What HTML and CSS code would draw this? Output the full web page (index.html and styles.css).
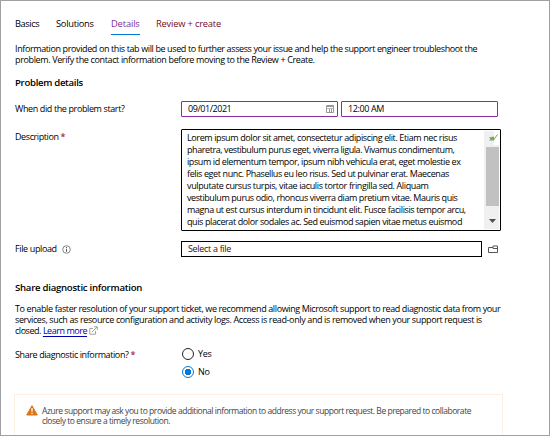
FILE: index.html
```html
<!DOCTYPE html>
<html lang="en">
<head>
<meta charset="utf-8">
<title>New support request</title>
<link rel="stylesheet" href="styles.css">
</head>
<body>
<main class="page">
  <nav class="tabs">
    <a class="tab basics">Basics</a><a class="tab solutions">Solutions</a><a class="tab details">Details</a><a class="tab review">Review + create</a>
  </nav>
  <p class="para intro"><span class="i1">Information provided on this tab will be used to further assess your issue and help the support engineer troubleshoot the</span><br><span class="i2">problem. Verify the contact information before moving to the Review + Create.</span></p>
  <h2 class="problem-title">Problem details</h2>
  <div class="row when">
    <label class="label l-when">When did the problem start?</label>
    <div class="input date"><span class="v-date">09/01/2021</span>
      <svg width="8" height="8" viewBox="0 0 8 8" fill="none" stroke="#989898"><path d="M.5 .5h7v7h-7z"/><path d="M0 1.500h8M3.500 3.500v4M5.500 3.500v4" /><path d="M1 3.500h6" stroke="#bbb"/></svg>
    </div>
    <div class="input time"><span class="v-time">12:00 AM</span></div>
  </div>
  <div class="row description">
    <label class="label"><span class="l-desc">Description</span><b class="req">*</b></label>
    <div class="textarea">
      <div class="lorem"><span class="t1">Lorem ipsum dolor sit amet, consectetur adipiscing elit. Etiam nec risus</span><br><span class="t2">pharetra, vestibulum purus eget, viverra ligula. Vivamus condimentum,</span><br><span class="t3">ipsum id elementum tempor, ipsum nibh vehicula erat, eget molestie ex</span><br><span class="t4">felis eget nunc. Phasellus eu leo risus. Sed ut pulvinar erat. Maecenas</span><br><span class="t5">vulputate cursus turpis, vitae iaculis tortor fringilla sed. Aliquam</span><br><span class="t6">vestibulum purus odio, rhoncus viverra diam pretium vitae. Mauris quis</span><br><span class="t7">magna ut est cursus interdum in tincidunt elit. Fusce facilisis tempor arcu,</span><br><span class="t8">quis placerat dolor sodales ac. Sed euismod sapien vitae metus euismod</span></div>
      <div class="scrollbar">
        <svg class="valid" width="15" height="16" viewBox="0 0 15 16"><path fill="#fff" d="M10 0h5v14h-5z"/><path fill="#8f9a86" d="M5 6.500L10 5.500v4H5l1.500-1.500z"/><path d="M7.500 7l2 2L13.500 3.500" fill="none" stroke="#67b23a"/></svg>
        <div class="thumb"></div>
        <svg class="down" width="15" height="21" viewBox="0 0 15 21"><path fill="#505050" d="M5 13h7L8.500 17z"/></svg>
      </div>
    </div>
  </div>
  <div class="row file">
    <label class="label"><span class="l-file">File upload</span>
      <svg class="info" width="9" height="9" viewBox="0 0 9 9"><circle cx="4.500" cy="4.500" r="3.800" fill="none" stroke="#666" stroke-width=".8"/><path d="M4.500 2v1M4.500 3.800v3" stroke="#555"/></svg>
    </label>
    <div class="input upload"><span class="v-file">Select a file</span></div>
    <svg class="folder" width="11" height="9" viewBox="0 0 11 9" fill="none" stroke="#555"><path d="M.5 2.500h4.500v-1.500h4.500v6.500h-9zM5 2.500v1h4.500"/></svg>
  </div>
  <h2 class="share-title">Share diagnostic information</h2>
  <p class="para consent"><span class="c1">To enable faster resolution of your support ticket, we recommend allowing Microsoft support to read diagnostic data from your</span><br><span class="c2">services, such as resource configuration and activity logs. Access is read-only and is removed when your support request is</span><br><span class="c3">closed. <a class="learn">Learn more</a></span><svg class="ext" width="9" height="9" viewBox="0 0 9 9" fill="none" stroke="#999" stroke-width=".9"><path d="M4 2.500H.8v5.700h5.700V5M3 6l5-5M5 .8h3.300V4"/></svg></p>
  <div class="row share">
    <label class="label share-label"><span class="l-share">Share diagnostic information?</span><b class="req">*</b></label>
    <div class="radios">
      <div class="radio"><i class="dot"></i><span>Yes</span></div>
      <div class="radio"><i class="dot on"></i><span>No</span></div>
    </div>
  </div>
  <aside class="notice">
    <svg width="12" height="11" viewBox="0 0 12 11"><path d="M6 .7L11.300 10H.7z" fill="#d9761c" stroke="#d9761c" stroke-linejoin="round"/><path d="M6 3v3.800M6 7.800v1.200" stroke="#fff" stroke-width="1.200"/></svg>
    <p><span class="n1">Azure support may ask you to provide additional information to address your support request. Be prepared to collaborate</span><br><span class="n2">closely to ensure a timely resolution.</span></p>
  </aside>
</main>
</body>
</html>
```
FILE: styles.css
```css
* { box-sizing: border-box; }
body { margin: 0; background: #fff; }
.page {
  width: 550px; height: 436px; overflow: hidden;
  border: 1px solid #a0a0a0; padding: 14px 0 0 14px;
  font: 9px/11px "Open Sans", "Noto Sans", sans-serif;
  letter-spacing: -.36px; color: #000; white-space: nowrap;
}
p, h2 { margin: 0; }
svg { display: block; flex: none; }
.tabs { display: flex; height: 20px; font-size: 9.3px; }
.tab { height: 20px; line-height: 18px; }
.basics { width: 41px; letter-spacing: -.45px; }
.solutions { width: 55px; letter-spacing: -.27px; }
.details { width: 29px; margin-right: 16px; color: #7b2c98; border-bottom: 1px solid #0078d4; letter-spacing: -.13px; }
.review { color: #750b1c; letter-spacing: -.18px; }
.para { height: 22px; }
.intro { margin-top: 8px; }
h2 { font-size: 9.6px; line-height: 12px; font-weight: 600; }
.problem-title { margin-top: 12px; letter-spacing: -.31px; }
.row { display: flex; }
.label { width: 166px; display: flex; flex: none; }
.when { margin-top: 12px; height: 16px; line-height: 15px; }
.input { height: 16px; border: 1px solid #000; display: flex; align-items: center; padding: 0 4px 0 6px; justify-content: space-between; line-height: 14px; }
.date { width: 157px; border-color: #8a2da5; border-radius: 1px; margin-right: 3px; padding-right: 3px; }
.time { width: 157px; border-color: #8a2da5; border-radius: 1px; }
.description { margin-top: 12px; height: 102px; line-height: 15px; }
.req { color: #a4262c; margin-left: 2px; font-weight: 600; }
.textarea { width: 320px; height: 102px; border: 1px solid #000; border-radius: 1px; display: flex; justify-content: space-between; }
.lorem { padding: 2px 0 0 5px; line-height: 12px; }
.scrollbar { width: 15px; margin: 1px 1px 1px 0; background: #f0f0f0; display: flex; flex-direction: column; flex: none; }
.thumb { width: 13px; height: 59px; margin-left: 2px; background: #c1c1c1; flex: none; }
.file { margin-top: 10px; height: 16px; line-height: 15px; }
.info { margin: 4px 0 0 5px; }
.upload { width: 301px; }
.folder { margin: 4px 0 0 6px; }
.share-title { margin-top: 25px; letter-spacing: -.26px; }
.consent { margin-top: 9px; height: 33px; }
.learn { color: #00a; text-decoration: underline; text-underline-offset: 2px; }
.ext { display: inline-block; margin-left: 2px; vertical-align: -1px; }
.share { margin-top: 9px; height: 36px; }
.share-label { padding-top: 4px; }
.radios { padding-left: 1px; }
.radio { height: 18px; display: flex; align-items: center; letter-spacing: -.3px; }
.radio span { padding-bottom: 2px; }
.dot { width: 12px; height: 12px; border: 1px solid #222; border-radius: 50%; margin-right: 4px; }
.on { border-color: #0078d4; background: radial-gradient(circle, #0078d4 3px, #fff 3.500px); }
.notice { width: 489px; height: 60px; margin-top: 13px; margin-left: -1px; border: 1px solid #fdf0e3; display: flex; padding: 10px 0 0 11px; font-size: 8.5px; line-height: 10px; color: #444; }
.notice p { margin: 1px 0 0 4px; }
/* per-line tracking */
.i1 { letter-spacing: -.387px; }
.i2 { letter-spacing: -.366px; }
.l-when { letter-spacing: -.384px; }
.v-date { letter-spacing: -.45px; }
.v-time { letter-spacing: -.38px; }
.l-desc { letter-spacing: -.415px; }
.t1 { letter-spacing: -.386px; }
.t2 { letter-spacing: -.424px; }
.t3 { letter-spacing: -.402px; }
.t4 { letter-spacing: -.388px; }
.t5 { letter-spacing: -.367px; }
.t6 { letter-spacing: -.413px; }
.t7 { letter-spacing: -.392px; }
.t8 { letter-spacing: -.402px; }
.l-file { letter-spacing: -.37px; }
.v-file { letter-spacing: -.32px; color: #3c0a10; }
.c1 { letter-spacing: -.382px; }
.c2 { letter-spacing: -.376px; }
.c3 { letter-spacing: -.46px; }
.l-share { letter-spacing: -.4px; }
.n1 { letter-spacing: -.45px; }
.n2 { letter-spacing: -.44px; }
```
